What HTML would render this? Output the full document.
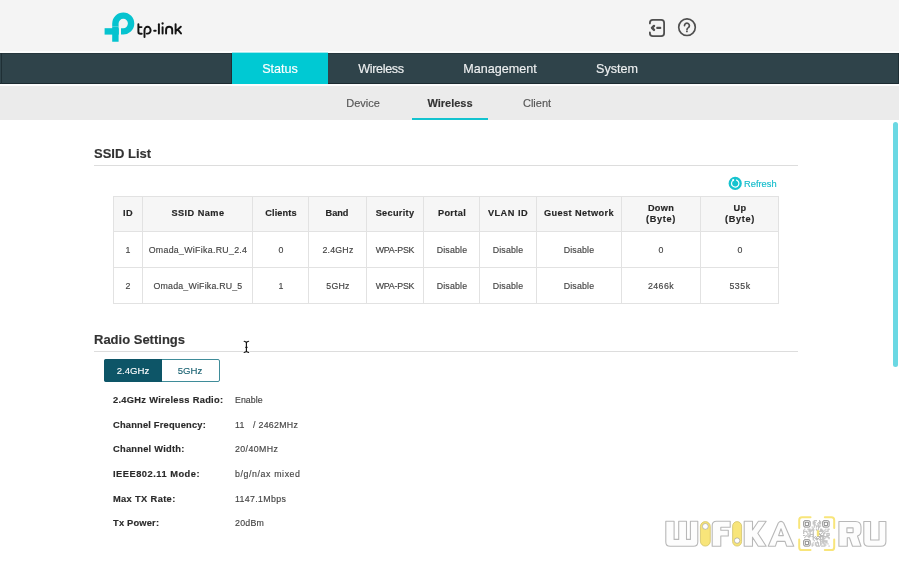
<!DOCTYPE html>
<html><head><meta charset="utf-8">
<style>
*{margin:0;padding:0;box-sizing:border-box}
html,body{width:899px;height:563px;overflow:hidden;background:#fff;font-family:"Liberation Sans",sans-serif;color:#333;position:relative}
.r{position:absolute}
.t{position:absolute;white-space:nowrap;line-height:normal;will-change:transform;-webkit-text-stroke:0.15px currentColor}
</style></head><body>
<div class="r" style="left:0;top:0;width:899px;height:51px;background:#f4f4f4"></div>
<div class="r" style="left:0;top:51px;width:899px;height:2px;background:#fcfcfc"></div>
<div class="r" style="left:0;top:53px;width:899px;height:31px;background:#2f434a"></div>
<div class="r" style="left:0;top:53px;width:899px;height:1px;background:#26373d"></div>
<div class="r" style="left:0;top:83px;width:899px;height:1px;background:#1b2a30"></div>
<div class="r" style="left:232px;top:52px;width:96px;height:1px;background:#9fe9ee"></div>
<div class="r" style="left:232px;top:53px;width:96px;height:31px;background:#00c9d3"></div>
<div class="r" style="left:231px;top:53px;width:1px;height:31px;background:#1f2f35"></div>
<div class="r" style="left:1px;top:53px;width:1px;height:31px;background:#1f2f35"></div>
<div class="r" style="left:898px;top:53px;width:1px;height:31px;background:#1f2f35"></div>
<div class="r" style="left:1px;top:86px;width:1px;height:34px;background:#e2e2e2"></div>
<div class="r" style="left:0;top:84px;width:899px;height:2px;background:#fcfcfc"></div>
<div class="r" style="left:0;top:86px;width:899px;height:34px;background:#ebebeb"></div>
<svg class="r" style="left:0;top:0" width="200" height="52" viewBox="0 0 200 52">
<path d="M115.4 41.7 V23.5 A7.85 7.85 0 1 1 123 31.35 H121" fill="none" stroke="#06c3cf" stroke-width="6.4"/>
<rect x="104.6" y="28.2" width="14.2" height="6.4" fill="#06c3cf"/>
<path d="M112.2 26.6 H118.6" stroke="#f4f4f4" stroke-width="0.5" opacity="0.6"/>
<g fill="none" stroke="#141414" stroke-width="1.95" stroke-linecap="round" stroke-linejoin="round">
<path d="M138.4 24.3 V32 Q138.4 33.7 140.3 33.7 H141.7 M138.4 27.1 H141.5"/>
<path d="M144.5 37.1 V30.2 A3.05 3.4 0 1 1 147.55 33.6 H146.8"/>
<path d="M154.2 30.7 H155.7"/>
<path d="M158.9 24.3 V33.6"/>
<path d="M162.6 27.1 V33.6"/>
<path d="M166.1 33.6 V29.85 A3.05 3.05 0 0 1 172.2 29.85 V33.6"/>
<path d="M175.6 24.3 V33.6 M176.2 30.9 L180.8 26.7 M177.8 29.7 L181 33.4"/>
</g>
<circle cx="162.6" cy="23.5" r="1.15" fill="#141414"/>
</svg>
<svg class="r" style="left:640px;top:10px" width="70" height="35" viewBox="640 10 70 35">
<g fill="none" stroke="#4f4f4f" stroke-width="1.8" stroke-linecap="round" stroke-linejoin="round">
<path d="M649.9 23.4 V22.8 Q649.9 19.9 652.8 19.9 H661.2 Q664.1 19.9 664.1 22.8 V33.3 Q664.1 36.2 661.2 36.2 H652.8 Q649.9 36.2 649.9 33.3 V32.3"/>
<path d="M654 25.9 L652 27.9 L654 29.9" stroke-width="2.4"/>
<path d="M657.2 27.9 H660.3" stroke-width="2.1"/>
<circle cx="687" cy="27.2" r="8.3" stroke-width="1.65"/>
<path d="M684.5 25.6 A2.45 2.45 0 1 1 688.3 27.6 Q687 28.4 687 29.6" stroke-width="1.7"/>
</g>
<circle cx="686.9" cy="31.4" r="0.95" fill="#4f4f4f"/>
</svg>
<svg class="r" style="left:650px;top:505px" width="249" height="58" viewBox="650 505 249 58">
<g fill="#fdfdfd" stroke="#b8b8b8" stroke-width="1.1" stroke-linejoin="round">
<path d="M665.8 521.2 H674.1 V539.4 H678.7 V521.2 H686.5 V539.4 H690.4 V521.2 H697.8 V542 Q697.8 546.3 693.5 546.3 H670.1 Q665.8 546.3 665.8 542 Z"/>
<path d="M712.2 546.2 V525.5 Q712.2 521.2 716.5 521.2 H730.2 V527.2 H720.8 V530.2 H728.3 V536 H720.8 V546.2 Z"/>
<path d="M744.2 521.2 H752.5 V530 L758.4 521.2 H766.2 L757.8 533.2 L766.2 546.2 H758.2 L752.5 537.2 V546.2 H744.2 Z"/>
<path d="M768.2 546.2 L778.3 523 Q781 519.8 783.7 523 L793.8 546.2 H786.6 L785 541.4 H777 L775.4 546.2 Z M778.6 535.6 H783.4 L781 528.8 Z"/>
<path d="M838.9 546.3 V521.5 H855.5 Q861 521.5 861 527 V531 Q861 535 857.5 536 L861 546.3 H852.5 L849.5 537.8 H847.3 V546.3 Z M846.9 527.9 V532.6 H853.1 V527.9 Z"/>
<path d="M863.8 521.5 H870.6 V540 H879 V521.5 H885.9 V541.5 Q885.9 546.3 881 546.3 H868.6 Q863.8 546.3 863.8 541.5 Z"/>
</g>
<g fill="#f8e57a" stroke="#cdbd62" stroke-width="0.7">
<rect x="700.4" y="521.6" width="9.9" height="24.5" rx="4.95"/>
<rect x="732.6" y="521.6" width="9" height="24.5" rx="4.5"/>
</g>
<circle cx="705.35" cy="526.4" r="2.9" fill="#fff" stroke="#999" stroke-width="0.6"/>
<circle cx="737.1" cy="540.6" r="2.7" fill="#fff" stroke="#999" stroke-width="0.6"/>
<g fill="none" stroke="#f8e57a" stroke-width="2" stroke-linecap="round">
<path d="M799.2 528 V520 Q799.2 517.2 802 517.2 H810.5"/>
<path d="M824.8 517.2 H831.4 Q834.2 517.2 834.2 520 V528"/>
<path d="M799.2 539.5 V547.2 Q799.2 550.1 802 550.1 H810.5"/>
<path d="M824.8 550.1 H831.4 Q834.2 550.1 834.2 547.2 V539.5"/>
</g>
<g fill="#b0b0b0"><rect x="813.76" y="520.20" width="1.06" height="1.06"/><rect x="814.82" y="520.20" width="1.06" height="1.06"/><rect x="815.87" y="520.20" width="1.06" height="1.06"/><rect x="819.04" y="520.20" width="1.06" height="1.06"/><rect x="812.70" y="521.26" width="1.06" height="1.06"/><rect x="813.76" y="521.26" width="1.06" height="1.06"/><rect x="819.04" y="521.26" width="1.06" height="1.06"/><rect x="820.10" y="521.26" width="1.06" height="1.06"/><rect x="812.70" y="522.31" width="1.06" height="1.06"/><rect x="813.76" y="522.31" width="1.06" height="1.06"/><rect x="814.82" y="522.31" width="1.06" height="1.06"/><rect x="817.98" y="522.31" width="1.06" height="1.06"/><rect x="819.04" y="522.31" width="1.06" height="1.06"/><rect x="820.10" y="522.31" width="1.06" height="1.06"/><rect x="812.70" y="523.37" width="1.06" height="1.06"/><rect x="813.76" y="523.37" width="1.06" height="1.06"/><rect x="816.93" y="523.37" width="1.06" height="1.06"/><rect x="819.04" y="523.37" width="1.06" height="1.06"/><rect x="820.10" y="523.37" width="1.06" height="1.06"/><rect x="813.76" y="524.42" width="1.06" height="1.06"/><rect x="814.82" y="524.42" width="1.06" height="1.06"/><rect x="817.98" y="524.42" width="1.06" height="1.06"/><rect x="813.76" y="525.48" width="1.06" height="1.06"/><rect x="815.87" y="525.48" width="1.06" height="1.06"/><rect x="816.93" y="525.48" width="1.06" height="1.06"/><rect x="817.98" y="525.48" width="1.06" height="1.06"/><rect x="819.04" y="525.48" width="1.06" height="1.06"/><rect x="820.10" y="525.48" width="1.06" height="1.06"/><rect x="811.65" y="526.54" width="1.06" height="1.06"/><rect x="813.76" y="526.54" width="1.06" height="1.06"/><rect x="815.87" y="526.54" width="1.06" height="1.06"/><rect x="817.98" y="526.54" width="1.06" height="1.06"/><rect x="819.04" y="526.54" width="1.06" height="1.06"/><rect x="812.70" y="527.59" width="1.06" height="1.06"/><rect x="817.98" y="527.59" width="1.06" height="1.06"/><rect x="804.26" y="528.65" width="1.06" height="1.06"/><rect x="807.42" y="528.65" width="1.06" height="1.06"/><rect x="808.48" y="528.65" width="1.06" height="1.06"/><rect x="809.54" y="528.65" width="1.06" height="1.06"/><rect x="811.65" y="528.65" width="1.06" height="1.06"/><rect x="812.70" y="528.65" width="1.06" height="1.06"/><rect x="815.87" y="528.65" width="1.06" height="1.06"/><rect x="817.98" y="528.65" width="1.06" height="1.06"/><rect x="820.10" y="528.65" width="1.06" height="1.06"/><rect x="821.15" y="528.65" width="1.06" height="1.06"/><rect x="825.38" y="528.65" width="1.06" height="1.06"/><rect x="827.49" y="528.65" width="1.06" height="1.06"/><rect x="828.54" y="528.65" width="1.06" height="1.06"/><rect x="803.20" y="529.70" width="1.06" height="1.06"/><rect x="808.48" y="529.70" width="1.06" height="1.06"/><rect x="809.54" y="529.70" width="1.06" height="1.06"/><rect x="810.59" y="529.70" width="1.06" height="1.06"/><rect x="811.65" y="529.70" width="1.06" height="1.06"/><rect x="812.70" y="529.70" width="1.06" height="1.06"/><rect x="813.76" y="529.70" width="1.06" height="1.06"/><rect x="815.87" y="529.70" width="1.06" height="1.06"/><rect x="816.93" y="529.70" width="1.06" height="1.06"/><rect x="820.10" y="529.70" width="1.06" height="1.06"/><rect x="821.15" y="529.70" width="1.06" height="1.06"/><rect x="822.21" y="529.70" width="1.06" height="1.06"/><rect x="824.32" y="529.70" width="1.06" height="1.06"/><rect x="827.49" y="529.70" width="1.06" height="1.06"/><rect x="803.20" y="530.76" width="1.06" height="1.06"/><rect x="804.26" y="530.76" width="1.06" height="1.06"/><rect x="805.31" y="530.76" width="1.06" height="1.06"/><rect x="806.37" y="530.76" width="1.06" height="1.06"/><rect x="808.48" y="530.76" width="1.06" height="1.06"/><rect x="809.54" y="530.76" width="1.06" height="1.06"/><rect x="810.59" y="530.76" width="1.06" height="1.06"/><rect x="812.70" y="530.76" width="1.06" height="1.06"/><rect x="819.04" y="530.76" width="1.06" height="1.06"/><rect x="820.10" y="530.76" width="1.06" height="1.06"/><rect x="821.15" y="530.76" width="1.06" height="1.06"/><rect x="822.21" y="530.76" width="1.06" height="1.06"/><rect x="823.26" y="530.76" width="1.06" height="1.06"/><rect x="825.38" y="530.76" width="1.06" height="1.06"/><rect x="826.43" y="530.76" width="1.06" height="1.06"/><rect x="827.49" y="530.76" width="1.06" height="1.06"/><rect x="803.20" y="531.82" width="1.06" height="1.06"/><rect x="806.37" y="531.82" width="1.06" height="1.06"/><rect x="809.54" y="531.82" width="1.06" height="1.06"/><rect x="812.70" y="531.82" width="1.06" height="1.06"/><rect x="822.21" y="531.82" width="1.06" height="1.06"/><rect x="824.32" y="531.82" width="1.06" height="1.06"/><rect x="803.20" y="532.87" width="1.06" height="1.06"/><rect x="807.42" y="532.87" width="1.06" height="1.06"/><rect x="809.54" y="532.87" width="1.06" height="1.06"/><rect x="812.70" y="532.87" width="1.06" height="1.06"/><rect x="819.04" y="532.87" width="1.06" height="1.06"/><rect x="821.15" y="532.87" width="1.06" height="1.06"/><rect x="823.26" y="532.87" width="1.06" height="1.06"/><rect x="824.32" y="532.87" width="1.06" height="1.06"/><rect x="826.43" y="532.87" width="1.06" height="1.06"/><rect x="827.49" y="532.87" width="1.06" height="1.06"/><rect x="828.54" y="532.87" width="1.06" height="1.06"/><rect x="807.42" y="533.93" width="1.06" height="1.06"/><rect x="809.54" y="533.93" width="1.06" height="1.06"/><rect x="810.59" y="533.93" width="1.06" height="1.06"/><rect x="811.65" y="533.93" width="1.06" height="1.06"/><rect x="812.70" y="533.93" width="1.06" height="1.06"/><rect x="819.04" y="533.93" width="1.06" height="1.06"/><rect x="820.10" y="533.93" width="1.06" height="1.06"/><rect x="823.26" y="533.93" width="1.06" height="1.06"/><rect x="826.43" y="533.93" width="1.06" height="1.06"/><rect x="828.54" y="533.93" width="1.06" height="1.06"/><rect x="803.20" y="534.98" width="1.06" height="1.06"/><rect x="804.26" y="534.98" width="1.06" height="1.06"/><rect x="806.37" y="534.98" width="1.06" height="1.06"/><rect x="808.48" y="534.98" width="1.06" height="1.06"/><rect x="809.54" y="534.98" width="1.06" height="1.06"/><rect x="812.70" y="534.98" width="1.06" height="1.06"/><rect x="820.10" y="534.98" width="1.06" height="1.06"/><rect x="821.15" y="534.98" width="1.06" height="1.06"/><rect x="822.21" y="534.98" width="1.06" height="1.06"/><rect x="823.26" y="534.98" width="1.06" height="1.06"/><rect x="826.43" y="534.98" width="1.06" height="1.06"/><rect x="827.49" y="534.98" width="1.06" height="1.06"/><rect x="828.54" y="534.98" width="1.06" height="1.06"/><rect x="805.31" y="536.04" width="1.06" height="1.06"/><rect x="807.42" y="536.04" width="1.06" height="1.06"/><rect x="808.48" y="536.04" width="1.06" height="1.06"/><rect x="809.54" y="536.04" width="1.06" height="1.06"/><rect x="811.65" y="536.04" width="1.06" height="1.06"/><rect x="812.70" y="536.04" width="1.06" height="1.06"/><rect x="814.82" y="536.04" width="1.06" height="1.06"/><rect x="816.93" y="536.04" width="1.06" height="1.06"/><rect x="817.98" y="536.04" width="1.06" height="1.06"/><rect x="819.04" y="536.04" width="1.06" height="1.06"/><rect x="820.10" y="536.04" width="1.06" height="1.06"/><rect x="821.15" y="536.04" width="1.06" height="1.06"/><rect x="822.21" y="536.04" width="1.06" height="1.06"/><rect x="823.26" y="536.04" width="1.06" height="1.06"/><rect x="824.32" y="536.04" width="1.06" height="1.06"/><rect x="825.38" y="536.04" width="1.06" height="1.06"/><rect x="826.43" y="536.04" width="1.06" height="1.06"/><rect x="827.49" y="536.04" width="1.06" height="1.06"/><rect x="804.26" y="537.10" width="1.06" height="1.06"/><rect x="808.48" y="537.10" width="1.06" height="1.06"/><rect x="812.70" y="537.10" width="1.06" height="1.06"/><rect x="813.76" y="537.10" width="1.06" height="1.06"/><rect x="815.87" y="537.10" width="1.06" height="1.06"/><rect x="819.04" y="537.10" width="1.06" height="1.06"/><rect x="820.10" y="537.10" width="1.06" height="1.06"/><rect x="822.21" y="537.10" width="1.06" height="1.06"/><rect x="823.26" y="537.10" width="1.06" height="1.06"/><rect x="825.38" y="537.10" width="1.06" height="1.06"/><rect x="827.49" y="537.10" width="1.06" height="1.06"/><rect x="828.54" y="537.10" width="1.06" height="1.06"/><rect x="812.70" y="538.15" width="1.06" height="1.06"/><rect x="814.82" y="538.15" width="1.06" height="1.06"/><rect x="815.87" y="538.15" width="1.06" height="1.06"/><rect x="816.93" y="538.15" width="1.06" height="1.06"/><rect x="817.98" y="538.15" width="1.06" height="1.06"/><rect x="820.10" y="538.15" width="1.06" height="1.06"/><rect x="822.21" y="538.15" width="1.06" height="1.06"/><rect x="823.26" y="538.15" width="1.06" height="1.06"/><rect x="824.32" y="538.15" width="1.06" height="1.06"/><rect x="828.54" y="538.15" width="1.06" height="1.06"/><rect x="812.70" y="539.21" width="1.06" height="1.06"/><rect x="815.87" y="539.21" width="1.06" height="1.06"/><rect x="816.93" y="539.21" width="1.06" height="1.06"/><rect x="819.04" y="539.21" width="1.06" height="1.06"/><rect x="820.10" y="539.21" width="1.06" height="1.06"/><rect x="821.15" y="539.21" width="1.06" height="1.06"/><rect x="822.21" y="539.21" width="1.06" height="1.06"/><rect x="823.26" y="539.21" width="1.06" height="1.06"/><rect x="813.76" y="540.26" width="1.06" height="1.06"/><rect x="820.10" y="540.26" width="1.06" height="1.06"/><rect x="822.21" y="540.26" width="1.06" height="1.06"/><rect x="823.26" y="540.26" width="1.06" height="1.06"/><rect x="824.32" y="540.26" width="1.06" height="1.06"/><rect x="825.38" y="540.26" width="1.06" height="1.06"/><rect x="826.43" y="540.26" width="1.06" height="1.06"/><rect x="816.93" y="541.32" width="1.06" height="1.06"/><rect x="820.10" y="541.32" width="1.06" height="1.06"/><rect x="821.15" y="541.32" width="1.06" height="1.06"/><rect x="822.21" y="541.32" width="1.06" height="1.06"/><rect x="823.26" y="541.32" width="1.06" height="1.06"/><rect x="824.32" y="541.32" width="1.06" height="1.06"/><rect x="825.38" y="541.32" width="1.06" height="1.06"/><rect x="826.43" y="541.32" width="1.06" height="1.06"/><rect x="812.70" y="542.38" width="1.06" height="1.06"/><rect x="814.82" y="542.38" width="1.06" height="1.06"/><rect x="815.87" y="542.38" width="1.06" height="1.06"/><rect x="816.93" y="542.38" width="1.06" height="1.06"/><rect x="817.98" y="542.38" width="1.06" height="1.06"/><rect x="820.10" y="542.38" width="1.06" height="1.06"/><rect x="822.21" y="542.38" width="1.06" height="1.06"/><rect x="823.26" y="542.38" width="1.06" height="1.06"/><rect x="825.38" y="542.38" width="1.06" height="1.06"/><rect x="826.43" y="542.38" width="1.06" height="1.06"/><rect x="811.65" y="543.43" width="1.06" height="1.06"/><rect x="814.82" y="543.43" width="1.06" height="1.06"/><rect x="817.98" y="543.43" width="1.06" height="1.06"/><rect x="820.10" y="543.43" width="1.06" height="1.06"/><rect x="821.15" y="543.43" width="1.06" height="1.06"/><rect x="823.26" y="543.43" width="1.06" height="1.06"/><rect x="824.32" y="543.43" width="1.06" height="1.06"/><rect x="827.49" y="543.43" width="1.06" height="1.06"/><rect x="811.65" y="544.49" width="1.06" height="1.06"/><rect x="812.70" y="544.49" width="1.06" height="1.06"/><rect x="814.82" y="544.49" width="1.06" height="1.06"/><rect x="815.87" y="544.49" width="1.06" height="1.06"/><rect x="817.98" y="544.49" width="1.06" height="1.06"/><rect x="820.10" y="544.49" width="1.06" height="1.06"/><rect x="824.32" y="544.49" width="1.06" height="1.06"/><rect x="825.38" y="544.49" width="1.06" height="1.06"/><rect x="811.65" y="545.54" width="1.06" height="1.06"/><rect x="815.87" y="545.54" width="1.06" height="1.06"/><rect x="816.93" y="545.54" width="1.06" height="1.06"/><rect x="817.98" y="545.54" width="1.06" height="1.06"/><rect x="819.04" y="545.54" width="1.06" height="1.06"/><rect x="821.15" y="545.54" width="1.06" height="1.06"/><rect x="822.21" y="545.54" width="1.06" height="1.06"/><rect x="823.26" y="545.54" width="1.06" height="1.06"/><rect x="824.32" y="545.54" width="1.06" height="1.06"/><rect x="828.54" y="545.54" width="1.06" height="1.06"/></g><rect x="803.70" y="520.70" width="6.39" height="6.39" rx="1.3" fill="none" stroke="#8c8c8c" stroke-width="1"/><rect x="805.31" y="522.31" width="3.17" height="3.17" fill="none" stroke="#8c8c8c" stroke-width="0.9"/><rect x="822.71" y="520.70" width="6.39" height="6.39" rx="1.3" fill="none" stroke="#8c8c8c" stroke-width="1"/><rect x="824.32" y="522.31" width="3.17" height="3.17" fill="none" stroke="#8c8c8c" stroke-width="0.9"/><rect x="803.70" y="539.71" width="6.39" height="6.39" rx="1.3" fill="none" stroke="#8c8c8c" stroke-width="1"/><rect x="805.31" y="541.32" width="3.17" height="3.17" fill="none" stroke="#8c8c8c" stroke-width="0.9"/><rect x="814.2" y="530.2" width="2.2" height="6" fill="#fff"/><rect x="816.8" y="530.2" width="2.4" height="6" fill="#f4e37a"/>
</svg>
<div class="t" style="left:130.00px;width:300px;text-align:center;top:61.80px;font-size:12.6px;font-weight:normal;color:#ffffff;">Status</div>
<div class="t" style="left:231.00px;width:300px;text-align:center;top:61.80px;font-size:12.6px;font-weight:normal;color:#eef0f1;letter-spacing:-0.35px">Wireless</div>
<div class="t" style="left:350.00px;width:300px;text-align:center;top:61.80px;font-size:12.6px;font-weight:normal;color:#eef0f1;">Management</div>
<div class="t" style="left:466.60px;width:300px;text-align:center;top:61.80px;font-size:12.6px;font-weight:normal;color:#eef0f1;">System</div>
<div class="t" style="left:212.70px;width:300px;text-align:center;top:96.95px;font-size:11px;font-weight:normal;color:#555;">Device</div>
<div class="t" style="left:300.00px;width:300px;text-align:center;top:96.95px;font-size:11px;font-weight:bold;color:#333;">Wireless</div>
<div class="t" style="left:386.90px;width:300px;text-align:center;top:96.95px;font-size:11px;font-weight:normal;color:#555;">Client</div>
<div class="r" style="left:412px;top:118px;width:76px;height:2px;background:#13c3cf"></div>
<div class="r" style="left:893px;top:122px;width:5px;height:245px;border-radius:2.5px;background:#6bd8e3"></div>
<div class="t" style="left:93.50px;top:146.04px;font-size:13px;font-weight:bold;color:#333;">SSID List</div>
<div class="r" style="left:94px;top:165px;width:704px;height:1px;background:#dddddd"></div>
<div class="t" style="left:94.00px;top:331.63px;font-size:13px;font-weight:bold;color:#333;">Radio Settings</div>
<div class="r" style="left:94px;top:351px;width:704px;height:1px;background:#dddddd"></div>
<svg class="r" style="left:720px;top:170px" width="30" height="30" viewBox="720 170 30 30"><circle cx="735.2" cy="183.4" r="6.6" fill="#17c3cf"/><path d="M736.16 179.83 A3.7 3.7 0 1 1 733.08 180.37" fill="none" stroke="#fff" stroke-width="1.2"/><circle cx="733.2" cy="180.1" r="1.05" fill="#fff"/></svg>
<div class="t" style="left:744.20px;top:178.58px;font-size:9.3px;font-weight:normal;color:#14bccb;">Refresh</div>
<div class="r" style="left:113px;top:196px;width:666px;height:35px;background:#f6f6f6"></div>
<div class="r" style="left:113px;top:196px;width:1px;height:108px;background:#e2e2e2"></div>
<div class="r" style="left:142px;top:196px;width:1px;height:108px;background:#e2e2e2"></div>
<div class="r" style="left:252px;top:196px;width:1px;height:108px;background:#e2e2e2"></div>
<div class="r" style="left:308px;top:196px;width:1px;height:108px;background:#e2e2e2"></div>
<div class="r" style="left:366px;top:196px;width:1px;height:108px;background:#e2e2e2"></div>
<div class="r" style="left:423px;top:196px;width:1px;height:108px;background:#e2e2e2"></div>
<div class="r" style="left:479px;top:196px;width:1px;height:108px;background:#e2e2e2"></div>
<div class="r" style="left:536px;top:196px;width:1px;height:108px;background:#e2e2e2"></div>
<div class="r" style="left:621px;top:196px;width:1px;height:108px;background:#e2e2e2"></div>
<div class="r" style="left:700px;top:196px;width:1px;height:108px;background:#e2e2e2"></div>
<div class="r" style="left:778px;top:196px;width:1px;height:108px;background:#e2e2e2"></div>
<div class="r" style="left:113px;top:196px;width:666px;height:1px;background:#e2e2e2"></div>
<div class="r" style="left:113px;top:231px;width:666px;height:1px;background:#e2e2e2"></div>
<div class="r" style="left:113px;top:267px;width:666px;height:1px;background:#e2e2e2"></div>
<div class="r" style="left:113px;top:303px;width:666px;height:1px;background:#e2e2e2"></div>
<div class="t" style="left:68.18px;width:120px;text-align:center;top:208.47px;font-size:9.2px;font-weight:bold;color:#262626;letter-spacing:0.35px">ID</div>
<div class="t" style="left:137.72px;width:120px;text-align:center;top:208.47px;font-size:9.2px;font-weight:bold;color:#262626;letter-spacing:0.45px">SSID Name</div>
<div class="t" style="left:220.57px;width:120px;text-align:center;top:208.47px;font-size:9.2px;font-weight:bold;color:#262626;letter-spacing:0.15px">Clients</div>
<div class="t" style="left:277.48px;width:120px;text-align:center;top:208.47px;font-size:9.2px;font-weight:bold;color:#262626;letter-spacing:-0.05px">Band</div>
<div class="t" style="left:335.15px;width:120px;text-align:center;top:208.47px;font-size:9.2px;font-weight:bold;color:#262626;letter-spacing:0.3px">Security</div>
<div class="t" style="left:391.68px;width:120px;text-align:center;top:208.47px;font-size:9.2px;font-weight:bold;color:#262626;letter-spacing:0.35px">Portal</div>
<div class="t" style="left:448.25px;width:120px;text-align:center;top:208.47px;font-size:9.2px;font-weight:bold;color:#262626;letter-spacing:0.5px">VLAN ID</div>
<div class="t" style="left:519.20px;width:120px;text-align:center;top:208.47px;font-size:9.2px;font-weight:bold;color:#262626;letter-spacing:0.4px">Guest Network</div>
<div class="t" style="left:601.12px;width:120px;text-align:center;top:202.67px;font-size:9.2px;font-weight:bold;color:#262626;letter-spacing:0.25px">Down</div>
<div class="t" style="left:601.35px;width:120px;text-align:center;top:213.97px;font-size:9.2px;font-weight:bold;color:#262626;letter-spacing:0.7px">(Byte)</div>
<div class="t" style="left:679.65px;width:120px;text-align:center;top:202.67px;font-size:9.2px;font-weight:bold;color:#262626;letter-spacing:0.3px">Up</div>
<div class="t" style="left:679.85px;width:120px;text-align:center;top:213.97px;font-size:9.2px;font-weight:bold;color:#262626;letter-spacing:0.7px">(Byte)</div>
<div class="t" style="left:68.10px;width:120px;text-align:center;top:244.94px;font-size:8.8px;font-weight:normal;color:#444;letter-spacing:0.2px">1</div>
<div class="t" style="left:137.65px;width:120px;text-align:center;top:244.94px;font-size:8.8px;font-weight:normal;color:#444;letter-spacing:0.3px">Omada_WiFika.RU_2.4</div>
<div class="t" style="left:220.60px;width:120px;text-align:center;top:244.94px;font-size:8.8px;font-weight:normal;color:#444;letter-spacing:0.2px">0</div>
<div class="t" style="left:277.60px;width:120px;text-align:center;top:244.94px;font-size:8.8px;font-weight:normal;color:#444;letter-spacing:0.2px">2.4GHz</div>
<div class="t" style="left:334.90px;width:120px;text-align:center;top:244.94px;font-size:8.8px;font-weight:normal;color:#444;letter-spacing:-0.2px">WPA-PSK</div>
<div class="t" style="left:391.60px;width:120px;text-align:center;top:244.94px;font-size:8.8px;font-weight:normal;color:#444;letter-spacing:0.2px">Disable</div>
<div class="t" style="left:448.10px;width:120px;text-align:center;top:244.94px;font-size:8.8px;font-weight:normal;color:#444;letter-spacing:0.2px">Disable</div>
<div class="t" style="left:519.10px;width:120px;text-align:center;top:244.94px;font-size:8.8px;font-weight:normal;color:#444;letter-spacing:0.2px">Disable</div>
<div class="t" style="left:601.10px;width:120px;text-align:center;top:244.94px;font-size:8.8px;font-weight:normal;color:#444;letter-spacing:0.2px">0</div>
<div class="t" style="left:679.60px;width:120px;text-align:center;top:244.94px;font-size:8.8px;font-weight:normal;color:#444;letter-spacing:0.2px">0</div>
<div class="t" style="left:68.10px;width:120px;text-align:center;top:280.84px;font-size:8.8px;font-weight:normal;color:#444;letter-spacing:0.2px">2</div>
<div class="t" style="left:137.60px;width:120px;text-align:center;top:280.84px;font-size:8.8px;font-weight:normal;color:#444;letter-spacing:0.2px">Omada_WiFika.RU_5</div>
<div class="t" style="left:220.60px;width:120px;text-align:center;top:280.84px;font-size:8.8px;font-weight:normal;color:#444;letter-spacing:0.2px">1</div>
<div class="t" style="left:277.60px;width:120px;text-align:center;top:280.84px;font-size:8.8px;font-weight:normal;color:#444;letter-spacing:0.2px">5GHz</div>
<div class="t" style="left:334.90px;width:120px;text-align:center;top:280.84px;font-size:8.8px;font-weight:normal;color:#444;letter-spacing:-0.2px">WPA-PSK</div>
<div class="t" style="left:391.60px;width:120px;text-align:center;top:280.84px;font-size:8.8px;font-weight:normal;color:#444;letter-spacing:0.2px">Disable</div>
<div class="t" style="left:448.10px;width:120px;text-align:center;top:280.84px;font-size:8.8px;font-weight:normal;color:#444;letter-spacing:0.2px">Disable</div>
<div class="t" style="left:519.10px;width:120px;text-align:center;top:280.84px;font-size:8.8px;font-weight:normal;color:#444;letter-spacing:0.2px">Disable</div>
<div class="t" style="left:601.20px;width:120px;text-align:center;top:280.84px;font-size:8.8px;font-weight:normal;color:#444;letter-spacing:0.4px">2466k</div>
<div class="t" style="left:679.75px;width:120px;text-align:center;top:280.84px;font-size:8.8px;font-weight:normal;color:#444;letter-spacing:0.5px">535k</div>
<div class="r" style="left:104px;top:359px;width:115.5px;height:23px;border:1.3px solid #3f8c99;border-radius:2px;background:#fff"></div>
<div class="r" style="left:104px;top:359px;width:58px;height:23px;background:#0d5567;border-radius:2px 0 0 2px"></div>
<div class="t" style="left:102.60px;width:60px;text-align:center;top:364.71px;font-size:9.6px;font-weight:normal;color:#fff;-webkit-text-stroke:0.1px #fff">2.4GHz</div>
<div class="t" style="left:160.40px;width:60px;text-align:center;top:364.71px;font-size:9.6px;font-weight:normal;color:#145e6e;-webkit-text-stroke:0.1px #145e6e">5GHz</div>
<svg class="r" style="left:236px;top:334px" width="20" height="24" viewBox="236 334 20 24"><g fill="none" stroke-linecap="round"><path d="M244.2 341.3 Q246.4 341.6 246.4 343.2 V350.8 Q246.4 352.2 244.2 352.4 M248.6 341.3 Q246.4 341.6 246.4 343.2 M246.4 350.8 Q246.4 352.2 248.6 352.4 M245.5 347.2 H247.3" stroke="#fff" stroke-width="2.8" opacity="0.9"/><path d="M244.2 341.3 Q246.4 341.6 246.4 343.2 V350.8 Q246.4 352.2 244.2 352.4 M248.6 341.3 Q246.4 341.6 246.4 343.2 M246.4 350.8 Q246.4 352.2 248.6 352.4 M245.6 347.2 H247.2" stroke="#111" stroke-width="1.15"/></g></svg>
<div class="t" style="left:113.40px;top:394.88px;font-size:9.3px;font-weight:bold;color:#2a2a2a;letter-spacing:0.3px">2.4GHz Wireless Radio:</div>
<div class="t" style="left:235.40px;top:394.89px;font-size:8.8px;font-weight:normal;color:#444;letter-spacing:0.05px">Enable</div>
<div class="t" style="left:113.40px;top:419.58px;font-size:9.3px;font-weight:bold;color:#2a2a2a;letter-spacing:0.2px">Channel Frequency:</div>
<div class="t" style="left:235.40px;top:419.59px;font-size:8.8px;font-weight:normal;color:#444;letter-spacing:0.3px">11&nbsp;&nbsp;&nbsp;/&nbsp;2462MHz</div>
<div class="t" style="left:113.40px;top:444.28px;font-size:9.3px;font-weight:bold;color:#2a2a2a;letter-spacing:0.25px">Channel Width:</div>
<div class="t" style="left:235.40px;top:444.29px;font-size:8.8px;font-weight:normal;color:#444;letter-spacing:0.4px">20/40MHz</div>
<div class="t" style="left:113.40px;top:468.98px;font-size:9.3px;font-weight:bold;color:#2a2a2a;letter-spacing:0.5px">IEEE802.11 Mode:</div>
<div class="t" style="left:235.40px;top:468.99px;font-size:8.8px;font-weight:normal;color:#444;letter-spacing:0.6px">b/g/n/ax mixed</div>
<div class="t" style="left:113.40px;top:493.58px;font-size:9.3px;font-weight:bold;color:#2a2a2a;letter-spacing:0.35px">Max TX Rate:</div>
<div class="t" style="left:235.40px;top:493.59px;font-size:8.8px;font-weight:normal;color:#444;letter-spacing:0.35px">1147.1Mbps</div>
<div class="t" style="left:113.40px;top:517.88px;font-size:9.3px;font-weight:bold;color:#2a2a2a;letter-spacing:0.2px">Tx Power:</div>
<div class="t" style="left:235.40px;top:517.89px;font-size:8.8px;font-weight:normal;color:#444;letter-spacing:0.25px">20dBm</div>
</body></html>
